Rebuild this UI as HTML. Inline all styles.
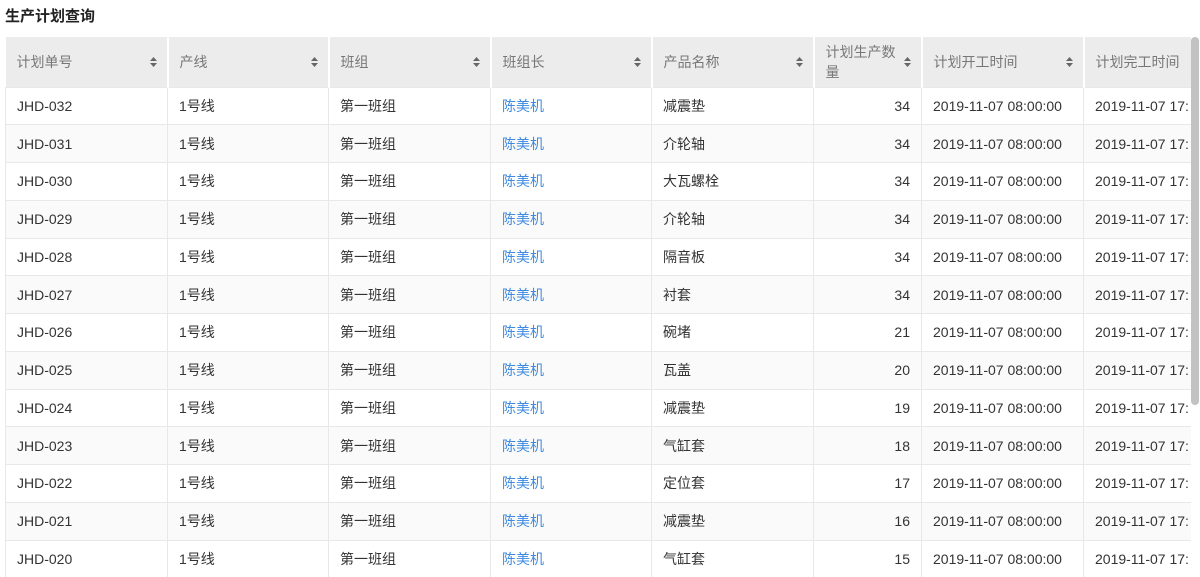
<!DOCTYPE html>
<html><head><meta charset="utf-8"><style>
*{margin:0;padding:0;box-sizing:border-box}
body{width:1200px;height:574px;overflow:hidden;background:#fff;font-family:"Liberation Sans","Noto Sans CJK SC",sans-serif;font-size:14px;color:#333;position:relative}
h1{position:absolute;left:5px;top:5px;font-size:15px;font-weight:bold;color:#222}
.wrap{position:absolute;left:5px;top:37px;width:1186px;height:540px;overflow:hidden}
table{border-collapse:collapse;table-layout:fixed;width:1290px}
th,td{border:1px solid #e8e8e8;padding:0 11px;white-space:nowrap;overflow:hidden;text-align:left}
th{background:#ececec;height:50px;font-weight:normal;color:#777;position:relative;white-space:normal;line-height:20px;border-color:#fff;border-width:0 2px 0 0}
th .s{position:absolute;right:10px;top:19px;width:7px;height:12px}
td{height:37.75px}
tr:nth-child(even) td{background:#fafafa}
.r{text-align:right}
.l{color:#3d8ae0}
.sb{position:absolute;left:1191px;top:37px;width:8px;height:368px;background:#c2c2c2;border-radius:4px}
.last{padding-right:0;text-overflow:clip}
</style></head><body>
<h1>生产计划查询</h1>
<div class="wrap"><table>
<colgroup><col style="width:162px"><col style="width:161px"><col style="width:162px"><col style="width:161px"><col style="width:162px"><col style="width:108px"><col style="width:162px"><col style="width:212px"></colgroup>
<thead><tr>
<th>计划单号<svg class="s" viewBox="0 0 7 12"><path d="M0 5L3.5 1L7 5Z M0 7L3.5 11L7 7Z" fill="#666"/></svg></th>
<th>产线<svg class="s" viewBox="0 0 7 12"><path d="M0 5L3.5 1L7 5Z M0 7L3.5 11L7 7Z" fill="#666"/></svg></th>
<th>班组<svg class="s" viewBox="0 0 7 12"><path d="M0 5L3.5 1L7 5Z M0 7L3.5 11L7 7Z" fill="#666"/></svg></th>
<th>班组长<svg class="s" viewBox="0 0 7 12"><path d="M0 5L3.5 1L7 5Z M0 7L3.5 11L7 7Z" fill="#666"/></svg></th>
<th>产品名称<svg class="s" viewBox="0 0 7 12"><path d="M0 5L3.5 1L7 5Z M0 7L3.5 11L7 7Z" fill="#666"/></svg></th>
<th style="padding-right:20px">计划生产数<br>量<svg class="s" viewBox="0 0 7 12"><path d="M0 5L3.5 1L7 5Z M0 7L3.5 11L7 7Z" fill="#666"/></svg></th>
<th>计划开工时间<svg class="s" viewBox="0 0 7 12"><path d="M0 5L3.5 1L7 5Z M0 7L3.5 11L7 7Z" fill="#666"/></svg></th>
<th>计划完工时间</th>
</tr></thead>
<tbody>
<tr><td>JHD-032</td><td>1号线</td><td>第一班组</td><td class="l">陈美机</td><td>减震垫</td><td class="r">34</td><td>2019-11-07 08:00:00</td><td>2019-11-07 17:</td></tr>
<tr><td>JHD-031</td><td>1号线</td><td>第一班组</td><td class="l">陈美机</td><td>介轮轴</td><td class="r">34</td><td>2019-11-07 08:00:00</td><td>2019-11-07 17:</td></tr>
<tr><td>JHD-030</td><td>1号线</td><td>第一班组</td><td class="l">陈美机</td><td>大瓦螺栓</td><td class="r">34</td><td>2019-11-07 08:00:00</td><td>2019-11-07 17:</td></tr>
<tr><td>JHD-029</td><td>1号线</td><td>第一班组</td><td class="l">陈美机</td><td>介轮轴</td><td class="r">34</td><td>2019-11-07 08:00:00</td><td>2019-11-07 17:</td></tr>
<tr><td>JHD-028</td><td>1号线</td><td>第一班组</td><td class="l">陈美机</td><td>隔音板</td><td class="r">34</td><td>2019-11-07 08:00:00</td><td>2019-11-07 17:</td></tr>
<tr><td>JHD-027</td><td>1号线</td><td>第一班组</td><td class="l">陈美机</td><td>衬套</td><td class="r">34</td><td>2019-11-07 08:00:00</td><td>2019-11-07 17:</td></tr>
<tr><td>JHD-026</td><td>1号线</td><td>第一班组</td><td class="l">陈美机</td><td>碗堵</td><td class="r">21</td><td>2019-11-07 08:00:00</td><td>2019-11-07 17:</td></tr>
<tr><td>JHD-025</td><td>1号线</td><td>第一班组</td><td class="l">陈美机</td><td>瓦盖</td><td class="r">20</td><td>2019-11-07 08:00:00</td><td>2019-11-07 17:</td></tr>
<tr><td>JHD-024</td><td>1号线</td><td>第一班组</td><td class="l">陈美机</td><td>减震垫</td><td class="r">19</td><td>2019-11-07 08:00:00</td><td>2019-11-07 17:</td></tr>
<tr><td>JHD-023</td><td>1号线</td><td>第一班组</td><td class="l">陈美机</td><td>气缸套</td><td class="r">18</td><td>2019-11-07 08:00:00</td><td>2019-11-07 17:</td></tr>
<tr><td>JHD-022</td><td>1号线</td><td>第一班组</td><td class="l">陈美机</td><td>定位套</td><td class="r">17</td><td>2019-11-07 08:00:00</td><td>2019-11-07 17:</td></tr>
<tr><td>JHD-021</td><td>1号线</td><td>第一班组</td><td class="l">陈美机</td><td>减震垫</td><td class="r">16</td><td>2019-11-07 08:00:00</td><td>2019-11-07 17:</td></tr>
<tr><td>JHD-020</td><td>1号线</td><td>第一班组</td><td class="l">陈美机</td><td>气缸套</td><td class="r">15</td><td>2019-11-07 08:00:00</td><td>2019-11-07 17:</td></tr>
</tbody></table></div>
<div class="sb"></div>
</body></html>
